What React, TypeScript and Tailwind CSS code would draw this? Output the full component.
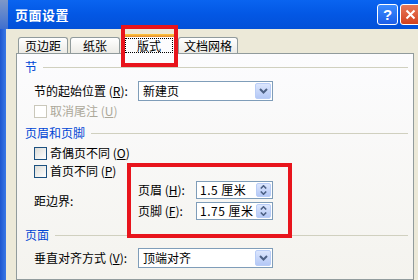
import React from "react";

function Chevron() {
  return (
    <svg width="9" height="6" viewBox="0 0 9 6">
      <path d="M1 1 L4.5 4.5 L8 1" stroke="#4d6185" strokeWidth="2" fill="none" />
    </svg>
  );
}

function SmallUp() {
  return (
    <svg width="7" height="4" viewBox="0 0 7 4">
      <path d="M0.8 3.5 L3.5 0.8 L6.2 3.5" stroke="#4d6185" strokeWidth="1.6" fill="none" />
    </svg>
  );
}

function SmallDown() {
  return (
    <svg width="7" height="4" viewBox="0 0 7 4">
      <path d="M0.8 0.5 L3.5 3.2 L6.2 0.5" stroke="#4d6185" strokeWidth="1.6" fill="none" />
    </svg>
  );
}

function Select({ text }: { text: string }) {
  return (
    <div className="w-[135px] h-[20px] border border-[#7f9db9] bg-white flex items-center">
      <span className="flex-1 pl-[4px] text-[12px] leading-none text-black">{text}</span>
      <div className="w-[16px] h-[16px] mr-[1px] rounded-[2px] border border-[#b9cdf7] bg-gradient-to-b from-[#dce6fd] to-[#b4c8f6] flex items-center justify-center">
        <Chevron />
      </div>
    </div>
  );
}

function Spinner({ value }: { value: string }) {
  return (
    <div className="w-[77px] h-[18px] border border-[#7f9db9] bg-white flex items-center">
      <span className="flex-1 pl-[3px] text-[12px] leading-none text-black tracking-[0.5px]">{value}</span>
      <div className="w-[15px] h-[14px] mr-[1px] rounded-[2px] border border-[#b9cdf7] bg-gradient-to-b from-[#dce6fd] to-[#b4c8f6] flex flex-col items-center justify-center gap-[2px]">
        <SmallUp />
        <SmallDown />
      </div>
    </div>
  );
}

function Checkbox({ disabled }: { disabled?: boolean }) {
  return (
    <div
      className={
        disabled
          ? "w-[13px] h-[13px] border border-[#cac8bb] bg-white"
          : "w-[13px] h-[13px] border border-[#1c5180] bg-gradient-to-br from-[#dcdcd7] to-white"
      }
    />
  );
}

function Header({ text, className }: { text: string; className?: string }) {
  return (
    <div className={"h-[14px] flex items-center " + (className ?? "")}>
      <span className="text-[12px] leading-none text-[#0046d5]">{text}</span>
      <div className="flex-1 ml-[6px] h-px bg-[#d0d0bf]" />
    </div>
  );
}

function Tab({ label, w }: { label: string; w: string }) {
  return (
    <div
      className={
        "h-[16px] border border-b-0 border-[#919b9c] rounded-t-[3px] bg-gradient-to-b from-white to-[#ecebe6] flex items-center justify-center text-[12px] leading-none text-black " +
        w
      }
    >
      {label}
    </div>
  );
}

export default function App() {
  return (
    <div className="w-[418px] h-[280px] overflow-hidden relative bg-[#ece9d8] flex flex-col font-['Noto_Sans_CJK_SC','Noto_Sans',sans-serif] text-[12px] text-black">
      {/* Title bar */}
      <div className="h-[29px] shrink-0 flex items-center bg-gradient-to-b from-[#0a64f0] via-[#0357e4] to-[#0250d8] relative">
        <div className="w-[8px] self-stretch bg-gradient-to-b from-[#7d98c8] to-[#3f6fcf]" />
        <span className="ml-[7px] text-[13px] font-bold text-white leading-none tracking-[0.5px]">页面设置</span>
        <div className="flex-1" />
        <div className="w-[21px] h-[21px] rounded-[3px] border border-white bg-gradient-to-b from-[#3c8cff] to-[#1c5ee8] flex items-center justify-center text-white font-bold text-[15px] leading-none font-['Liberation_Sans',sans-serif]">
          ?
        </div>
        <div className="ml-[2px] w-[21px] h-[21px] -mr-[3px] rounded-[3px] border border-white bg-gradient-to-b from-[#e8795a] to-[#d2401b] flex items-center justify-center">
          <svg width="11" height="11" viewBox="0 0 11 11">
            <path d="M1.5 1.5 L9.5 9.5 M9.5 1.5 L1.5 9.5" stroke="white" strokeWidth="2" />
          </svg>
        </div>
      </div>

      <div className="flex-1 flex min-h-0">
        <div className="w-[6px] bg-gradient-to-r from-[#1c55cf] to-[#3a78e6]" />
        <div className="flex-1 flex flex-col min-h-0">
          {/* tab strip */}
          <div className="h-[24px] shrink-0 flex items-end gap-[2px] pl-[12px] relative z-10">
            <Tab label="页边距" w="w-[50px]" />
            <Tab label="纸张" w="w-[50px]" />
            <div className="w-[54px] h-[20px] -mb-px border border-b-0 border-[#919b9c] rounded-t-[3px] bg-[#fcfcfe] flex flex-col">
              <div className="h-[3px] -mx-px -mt-px rounded-t-[3px] bg-gradient-to-b from-[#ffc83c] to-[#e68b2c]" />
              <div className="flex-1 flex items-start justify-center pt-[1px]">
                <div className="w-[48px] h-[15px] border border-dotted border-black flex items-center justify-center text-[12px] leading-none">
                  版式
                </div>
              </div>
            </div>
            <Tab label="文档网格" w="w-[60px]" />
          </div>
          {/* panel */}
          <div className="ml-[10px] w-[398px] flex-1 border border-[#919b9c] bg-gradient-to-b from-[#fcfcfe] to-[#f4f3ee]">
            <div className="pt-[6px] pl-[8px] pr-[5px] flex flex-col">
              <Header text="节" />
              <div className="mt-[7px] h-[20px] flex items-center pl-[9px]">
                <span className="w-[104px] leading-none">
                  节的起始位置 (<u>R</u>):
                </span>
                <Select text="新建页" />
              </div>
              <div className="mt-[2px] h-[16px] flex items-center pl-[9px]">
                <Checkbox disabled />
                <span className="ml-[3px] leading-none text-[#aca899]">
                  取消尾注 (<u>U</u>)
                </span>
              </div>
              <Header text="页眉和页脚" className="mt-[7px]" />
              <div className="mt-[5px] h-[16px] flex items-center pl-[9px]">
                <Checkbox />
                <span className="ml-[3px] leading-none">
                  奇偶页不同 (<u>O</u>)
                </span>
              </div>
              <div className="mt-[2px] h-[16px] flex items-center pl-[9px]">
                <Checkbox />
                <span className="ml-[3px] leading-none">
                  首页不同 (<u>P</u>)
                </span>
              </div>
              <div className="mt-[2px] flex pl-[9px]">
                <div className="w-[104px] flex items-center leading-none">距边界:</div>
                <div className="flex flex-col gap-[3px]">
                  <div className="h-[18px] flex items-center">
                    <span className="w-[58px] leading-none">
                      页眉 (<u>H</u>):
                    </span>
                    <Spinner value="1.5 厘米" />
                  </div>
                  <div className="h-[18px] flex items-center">
                    <span className="w-[58px] leading-none">
                      页脚 (<u>F</u>):
                    </span>
                    <Spinner value="1.75 厘米" />
                  </div>
                </div>
              </div>
              <Header text="页面" className="mt-[8px]" />
              <div className="mt-[6px] h-[20px] flex items-center pl-[9px]">
                <span className="w-[104px] leading-none">
                  垂直对齐方式 (<u>V</u>):
                </span>
                <Select text="顶端对齐" />
              </div>
            </div>
          </div>
        </div>
      </div>

      {/* red highlight boxes */}
      <div className="absolute left-[121px] top-[25px] w-[57px] h-[42px] border-[4px] border-[#e8141c] pointer-events-none z-20" />
      <div className="absolute left-[127px] top-[163px] w-[165px] h-[75px] border-[4px] border-[#e8141c] pointer-events-none z-20" />
    </div>
  );
}
